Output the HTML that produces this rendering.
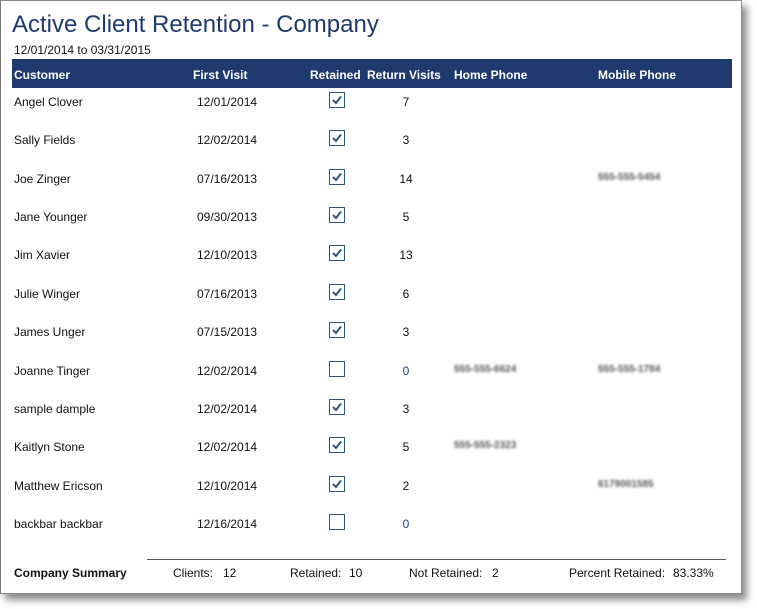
<!DOCTYPE html>
<html><head><style>
body{margin:0;width:757px;height:609px;background:#fff;font-family:"Liberation Sans",sans-serif;position:relative;overflow:hidden}
#panel{position:absolute;left:0;top:0;width:740px;height:592px;border:1px solid #8a8a8a;border-left-color:#777;background:#fff;box-shadow:5px 6px 7px rgba(0,0,0,.45)}
.a{position:absolute;white-space:nowrap;font-size:12px;color:#111;margin-top:1px}
.t{position:absolute;left:12px;top:11px;font-size:24px;color:#1f3a6e}
.hdr{position:absolute;left:12px;top:59px;width:720px;height:29px;background:#1f3a6e}
.h{position:absolute;top:68px;font-size:12px;font-weight:bold;color:#fff;white-space:nowrap}
.cb{position:absolute;left:329px;width:14px;height:14px;border:1.5px solid #2e5580;background:#fff}
.bl{position:absolute;font-size:10px;color:#555;filter:blur(1.2px);white-space:nowrap;font-weight:bold}
.n{position:absolute;width:30px;text-align:center;left:391px;font-size:12px;color:#111;margin-top:1px}
</style></head><body>
<div id="panel"></div>
<div class="t">Active Client Retention - Company</div>
<div class="a" style="left:14px;top:42px">12/01/2014 to 03/31/2015</div>
<div class="hdr"></div>
<div class="h" style="left:14px">Customer</div>
<div class="h" style="left:193px">First Visit</div>
<div class="h" style="left:310px">Retained</div>
<div class="h" style="left:367px">Return Visits</div>
<div class="h" style="left:454px">Home Phone</div>
<div class="h" style="left:598px">Mobile Phone</div>

<div class="a" style="left:14px;top:94px">Angel Clover</div><div class="a" style="left:197px;top:94px">12/01/2014</div><div class="cb" style="top:92px"><svg width="14" height="14"><path d="M3 7l3 3L11 3.5" stroke="#2e5580" stroke-width="2" fill="none"/></svg></div><div class="n" style="top:94px">7</div>
<div class="a" style="left:14px;top:132px">Sally Fields</div><div class="a" style="left:197px;top:132px">12/02/2014</div><div class="cb" style="top:130px"><svg width="14" height="14"><path d="M3 7l3 3L11 3.5" stroke="#2e5580" stroke-width="2" fill="none"/></svg></div><div class="n" style="top:132px">3</div>
<div class="a" style="left:14px;top:171px">Joe Zinger</div><div class="a" style="left:197px;top:171px">07/16/2013</div><div class="cb" style="top:169px"><svg width="14" height="14"><path d="M3 7l3 3L11 3.5" stroke="#2e5580" stroke-width="2" fill="none"/></svg></div><div class="n" style="top:171px">14</div><div class="bl" style="left:598px;top:172px">555-555-5454</div>
<div class="a" style="left:14px;top:209px">Jane Younger</div><div class="a" style="left:197px;top:209px">09/30/2013</div><div class="cb" style="top:207px"><svg width="14" height="14"><path d="M3 7l3 3L11 3.5" stroke="#2e5580" stroke-width="2" fill="none"/></svg></div><div class="n" style="top:209px">5</div>
<div class="a" style="left:14px;top:247px">Jim Xavier</div><div class="a" style="left:197px;top:247px">12/10/2013</div><div class="cb" style="top:245px"><svg width="14" height="14"><path d="M3 7l3 3L11 3.5" stroke="#2e5580" stroke-width="2" fill="none"/></svg></div><div class="n" style="top:247px">13</div>
<div class="a" style="left:14px;top:286px">Julie Winger</div><div class="a" style="left:197px;top:286px">07/16/2013</div><div class="cb" style="top:284px"><svg width="14" height="14"><path d="M3 7l3 3L11 3.5" stroke="#2e5580" stroke-width="2" fill="none"/></svg></div><div class="n" style="top:286px">6</div>
<div class="a" style="left:14px;top:324px">James Unger</div><div class="a" style="left:197px;top:324px">07/15/2013</div><div class="cb" style="top:322px"><svg width="14" height="14"><path d="M3 7l3 3L11 3.5" stroke="#2e5580" stroke-width="2" fill="none"/></svg></div><div class="n" style="top:324px">3</div>
<div class="a" style="left:14px;top:363px">Joanne Tinger</div><div class="a" style="left:197px;top:363px">12/02/2014</div><div class="cb" style="top:361px"></div><div class="n" style="top:363px;color:#1f3a8e">0</div><div class="bl" style="left:454px;top:364px">555-555-6624</div><div class="bl" style="left:598px;top:364px">555-555-1784</div>
<div class="a" style="left:14px;top:401px">sample dample</div><div class="a" style="left:197px;top:401px">12/02/2014</div><div class="cb" style="top:399px"><svg width="14" height="14"><path d="M3 7l3 3L11 3.5" stroke="#2e5580" stroke-width="2" fill="none"/></svg></div><div class="n" style="top:401px">3</div>
<div class="a" style="left:14px;top:439px">Kaitlyn Stone</div><div class="a" style="left:197px;top:439px">12/02/2014</div><div class="cb" style="top:437px"><svg width="14" height="14"><path d="M3 7l3 3L11 3.5" stroke="#2e5580" stroke-width="2" fill="none"/></svg></div><div class="n" style="top:439px">5</div><div class="bl" style="left:454px;top:440px">555-555-2323</div>
<div class="a" style="left:14px;top:478px">Matthew Ericson</div><div class="a" style="left:197px;top:478px">12/10/2014</div><div class="cb" style="top:476px"><svg width="14" height="14"><path d="M3 7l3 3L11 3.5" stroke="#2e5580" stroke-width="2" fill="none"/></svg></div><div class="n" style="top:478px">2</div><div class="bl" style="left:598px;top:479px">6179001585</div>
<div class="a" style="left:14px;top:516px">backbar backbar</div><div class="a" style="left:197px;top:516px">12/16/2014</div><div class="cb" style="top:514px"></div><div class="n" style="top:516px;color:#1f3a8e">0</div>

<div style="position:absolute;left:147px;top:559px;width:579px;height:1px;background:#555"></div>
<div class="a" style="left:14px;top:565px;font-weight:bold">Company Summary</div>
<div class="a" style="left:173px;top:565px">Clients:</div><div class="a" style="left:223px;top:565px">12</div>
<div class="a" style="left:290px;top:565px">Retained:</div><div class="a" style="left:349px;top:565px">10</div>
<div class="a" style="left:409px;top:565px">Not Retained:</div><div class="a" style="left:492px;top:565px">2</div>
<div class="a" style="left:569px;top:565px">Percent Retained:</div><div class="a" style="left:673px;top:565px">83.33%</div>
</body></html>
